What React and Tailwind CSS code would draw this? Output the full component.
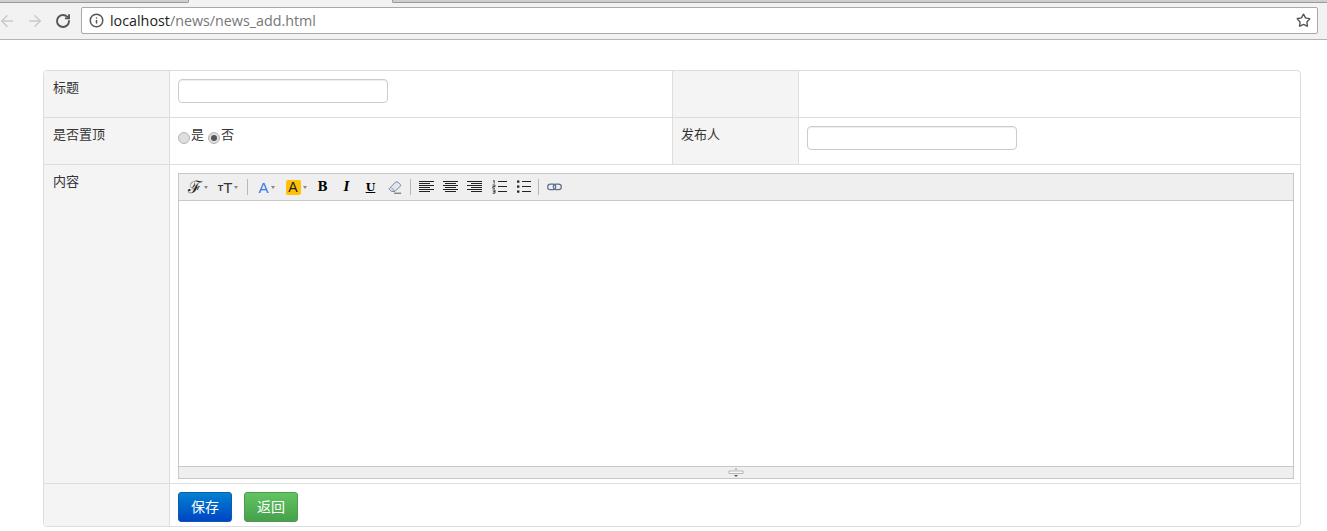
import React from "react";
import { ArrowLeft, ArrowRight, RotateCw, Info, Star } from "lucide-react";

const CJK = "font-['Liberation_Sans','Noto_Sans_CJK_SC',sans-serif]";

function Caret() {
  return <span className="ml-[2px] h-0 w-0 border-x-[2.5px] border-t-[3px] border-x-transparent border-t-[#888]" />;
}

function Sep({ className = "" }) {
  return <span className={`h-[16px] w-px shrink-0 bg-[#b8b8b8] ${className}`} />;
}

function ToolBtn({ children, className = "" }) {
  return <span className={`flex h-[16px] shrink-0 items-center justify-center ${className}`}>{children}</span>;
}

function Lines({ kind }) {
  const shortX = kind === "left" ? 0 : kind === "center" ? 2 : 4;
  return (
    <svg width="15" height="12" viewBox="0 0 15 12" shapeRendering="crispEdges">
      {[0, 1, 2, 3, 4, 5].map((i) =>
        i % 2 === 0 ? (
          <rect key={i} x="0" y={i * 2} width="15" height="1" fill="#222" />
        ) : (
          <rect key={i} x={shortX} y={i * 2} width="11" height="1" fill="#222" />
        )
      )}
    </svg>
  );
}

function ListIcon({ ordered }) {
  return (
    <svg width="15" height="14" viewBox="0 0 15 14">
      {[1, 6, 11].map((y) => (
        <rect key={y} x="6" y={y} width="9" height="1" fill="#222" />
      ))}
      {ordered ? (
        <g fill="none" stroke="#333" strokeWidth="0.9">
          <path d="M1 1 L2.2 0.5 V3.6" />
          <path d="M0.6 5 H3 V6.6 H0.8 V8.2 H3" />
          <path d="M0.6 10 H3 V13.2 H0.6 M1.2 11.6 H3" />
        </g>
      ) : (
        <g fill="#222">
          <rect x="1" y="0.5" width="2.4" height="2.2" />
          <rect x="1" y="5.5" width="2.4" height="2.2" />
          <rect x="1" y="10.5" width="2.4" height="2.2" />
        </g>
      )}
    </svg>
  );
}

function Toolbar() {
  return (
    <div className="flex h-[27px] items-center border-b border-[#c8c8c8] bg-[#efefef] pl-[9px]">
      <ToolBtn className="w-[20px]">
        <span className="font-['DejaVu_Serif',serif] text-[17px] leading-none text-[#222]">ℱ</span>
        <Caret />
      </ToolBtn>
      <ToolBtn className="ml-[10px] w-[20px]">
        <span className="mt-[3px] font-['Liberation_Sans',sans-serif] text-[9px] font-bold leading-none text-[#333]">T</span>
        <span className="font-['Liberation_Sans',sans-serif] text-[15px] leading-none text-[#333]">T</span>
        <Caret />
      </ToolBtn>
      <Sep className="ml-[9px]" />
      <ToolBtn className="ml-[10px] w-[17px]">
        <span className="font-['Liberation_Sans',sans-serif] text-[15px] leading-none text-[#3b78e7]">A</span>
        <Caret />
      </ToolBtn>
      <ToolBtn className="ml-[10px] w-[22px]">
        <span className="flex h-[15px] w-[15px] items-center justify-center rounded-[2px] bg-[#ffc107] font-['Liberation_Sans',sans-serif] text-[14px] leading-none text-[#222]">A</span>
        <Caret />
      </ToolBtn>
      <ToolBtn className="ml-[10px] w-[11px]">
        <span className="font-['DejaVu_Serif',serif] text-[12px] font-bold leading-none text-black">B</span>
      </ToolBtn>
      <ToolBtn className="ml-[13px] w-[11px]">
        <span className="font-['DejaVu_Serif',serif] text-[12px] font-bold italic leading-none text-black">I</span>
      </ToolBtn>
      <ToolBtn className="ml-[13px] w-[11px]">
        <span className="font-['DejaVu_Serif',serif] text-[11px] font-bold leading-none text-black underline">U</span>
      </ToolBtn>
      <ToolBtn className="ml-[12px] w-[14px]">
        <svg width="16" height="15" viewBox="0 0 16 15">
          <path d="M1 9 L8.5 1.5 Q10 0.5 11.5 1.5 L14 4 Q15 5 13.5 6.5 L8 12 H4 Z" fill="#dfe6f2" stroke="#667" strokeWidth="0.9" />
          <path d="M3.5 7.5 L7.5 11.5" stroke="#667" strokeWidth="0.8" />
          <path d="M7 14 H15" stroke="#444" strokeWidth="1" />
        </svg>
      </ToolBtn>
      <Sep className="ml-[8px]" />
      <ToolBtn className="ml-[8px] w-[15px]"><Lines kind="left" /></ToolBtn>
      <ToolBtn className="ml-[9px] w-[15px]"><Lines kind="center" /></ToolBtn>
      <ToolBtn className="ml-[9px] w-[15px]"><Lines kind="right" /></ToolBtn>
      <ToolBtn className="ml-[10px] w-[15px]"><ListIcon ordered /></ToolBtn>
      <ToolBtn className="ml-[9px] w-[15px]"><ListIcon /></ToolBtn>
      <Sep className="ml-[7px]" />
      <ToolBtn className="ml-[8px] w-[15px]">
        <svg width="15" height="8" viewBox="0 0 15 8">
          <rect x="0.7" y="1.2" width="8" height="5.4" rx="2.7" fill="#eef1f6" stroke="#5e6f8f" strokeWidth="1.2" />
          <rect x="6.3" y="1.2" width="8" height="5.4" rx="2.7" fill="none" stroke="#5e6f8f" strokeWidth="1.2" />
        </svg>
      </ToolBtn>
    </div>
  );
}

function Input() {
  return <input className="h-[24px] w-[210px] rounded-[4px] border border-[#ccc] bg-white shadow-[inset_0_1px_1px_rgba(0,0,0,0.075)]" />;
}

function Radio({ checked }) {
  return (
    <span className="flex h-[12px] w-[12px] items-center justify-center rounded-full border border-[#b5b5b5] bg-[#dedede]">
      {checked && <span className="h-[6px] w-[6px] rounded-full bg-[#555]" />}
    </span>
  );
}

function Label({ children, className = "pl-[9px]" }) {
  return (
    <div className={`w-[126px] shrink-0 border-r border-[#ddd] bg-[#f4f4f4] pt-[7px] text-[13px] leading-[20px] text-[#333] ${className}`}>
      {children}
    </div>
  );
}

export default function App() {
  return (
    <div className={`h-[531px] overflow-hidden bg-white ${CJK}`}>
      {/* browser chrome */}
      <div className="h-[40px] border-b border-[#b4b4b4] bg-[#f2f2f2]">
        <div className="flex h-[3px] items-start">
          <div className="h-[3px] w-[189px] rounded-br-[2px] border-b border-r border-[#9a9a9a] bg-[#cfcfcf]" />
          <div className="ml-auto h-[3px] w-[935px] rounded-bl-[2px] border-b border-l border-[#9a9a9a] bg-[#cfcfcf]" />
        </div>
        <div className="flex h-[35px] items-center pr-[9px]">
          <ArrowLeft size={18} strokeWidth={2} className="ml-[-2px] text-[#c9c9c9]" />
          <ArrowRight size={18} strokeWidth={2} className="ml-[10px] text-[#c9c9c9]" />
          <RotateCw size={16} strokeWidth={2.8} className="ml-[11px] text-[#555]" />
          <div className="ml-[10px] flex h-[27px] flex-1 items-center rounded-[2px] border border-[#a9a9a9] bg-white pl-[7px] pr-[6px]">
            <Info size={15} strokeWidth={2.4} className="text-[#555]" />
            <span className="ml-[6px] font-['Open_Sans','Noto_Sans',sans-serif] text-[14.3px] text-[#222]">
              localhost<span className="text-[#777]">/news/news_add.html</span>
            </span>
            <Star size={15} strokeWidth={2.2} className="ml-auto text-[#555]" />
          </div>
        </div>
      </div>

      {/* form table */}
      <div className="pl-[43px] pr-[26px] pt-[30px]">
        <div className="overflow-hidden rounded-[4px] border border-[#ddd] text-[13px] text-[#333]">
          <div className="flex h-[47px] border-b border-[#ddd]">
            <Label>标题</Label>
            <div className="w-[503px] shrink-0 border-r border-[#ddd] pl-[8px] pt-[8px]"><Input /></div>
            <Label />
            <div className="flex-1" />
          </div>
          <div className="flex h-[47px] border-b border-[#ddd]">
            <Label>是否置顶</Label>
            <div className="flex w-[503px] shrink-0 border-r border-[#ddd] pl-[8px] pt-[7px]">
              <div className="pt-[7px]"><Radio /></div>
              <span className="ml-px leading-[20px]">是</span>
              <div className="ml-[4px] pt-[7px]"><Radio checked /></div>
              <span className="ml-px leading-[20px]">否</span>
            </div>
            <Label className="pl-[8px]">发布人</Label>
            <div className="flex-1 pl-[8px] pt-[8px]"><Input /></div>
          </div>
          <div className="flex h-[319px] border-b border-[#ddd]">
            <Label>内容</Label>
            <div className="flex-1 pl-[8px] pr-[6px] pt-[8px]">
              <div className="flex h-[306px] flex-col border border-[#c8c8c8]">
                <Toolbar />
                <div className="flex-1 bg-white" />
                <div className="flex h-[12px] items-center justify-center border-t border-[#c8c8c8] bg-[#efefef]">
                  <svg width="16" height="11" viewBox="0 0 16 11">
                    <path d="M6.5 2.5 L8 1 L9.5 2.5 Z" fill="#999" />
                    <rect x="1" y="4" width="14" height="2.5" fill="#f8f8f8" stroke="#aaa" strokeWidth="0.8" />
                    <path d="M6 8 H10 L8 10 Z" fill="#555" />
                  </svg>
                </div>
              </div>
            </div>
          </div>
          <div className="flex h-[42px]">
            <Label />
            <div className="flex flex-1 gap-[12px] pl-[8px] pt-[8px]">
              <button className="h-[30px] w-[54px] rounded-[3px] border border-[#0a5cb0] bg-gradient-to-b from-[#0a80d0] to-[#0044c4] text-[14px] text-white">保存</button>
              <button className="h-[30px] w-[54px] rounded-[3px] border border-[#4c9a52] bg-gradient-to-b from-[#62c462] to-[#46a04a] text-[14px] text-white">返回</button>
            </div>
          </div>
        </div>
      </div>
    </div>
  );
}
